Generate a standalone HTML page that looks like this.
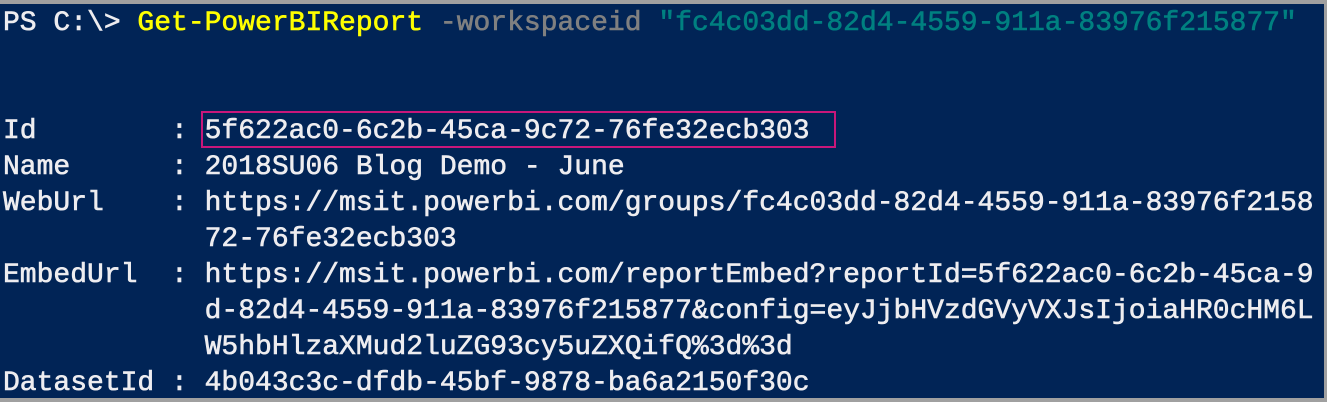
<!DOCTYPE html>
<html><head><style>
html,body{margin:0;padding:0;}
body{width:1327px;height:402px;background:#a0a0a0;position:relative;overflow:hidden;}
.con{position:absolute;left:0;top:4px;width:1324px;height:394px;background:#012456;}
pre{margin:0;position:absolute;left:3px;top:6px;font-family:"Liberation Mono",monospace;font-size:28px;line-height:36px;color:#eeedf0;font-weight:normal;white-space:pre;-webkit-text-stroke:0.6px currentColor;}
.y{color:#ffff00}.g{color:#808080}.t{color:#008080}
.box{position:absolute;left:201px;top:111px;width:631px;height:33px;border:2px solid #c8177a;}
</style></head><body>
<div class="con"></div>
<pre>PS C:\&gt; <span class="y">Get-PowerBIReport</span> <span class="g">-workspaceid</span> <span class="t">"fc4c03dd-82d4-4559-911a-83976f215877"</span>


Id        : 5f622ac0-6c2b-45ca-9c72-76fe32ecb303
Name      : 2018SU06 Blog Demo - June
WebUrl    : https://msit.powerbi.com/groups/fc4c03dd-82d4-4559-911a-83976f2158
            72-76fe32ecb303
EmbedUrl  : https://msit.powerbi.com/reportEmbed?reportId=5f622ac0-6c2b-45ca-9
            d-82d4-4559-911a-83976f215877&amp;config=eyJjbHVzdGVyVXJsIjoiaHR0cHM6L
            W5hbHlzaXMud2luZG93cy5uZXQifQ%3d%3d
DatasetId : 4b043c3c-dfdb-45bf-9878-ba6a2150f30c</pre>
<div class="box"></div>
</body></html>
